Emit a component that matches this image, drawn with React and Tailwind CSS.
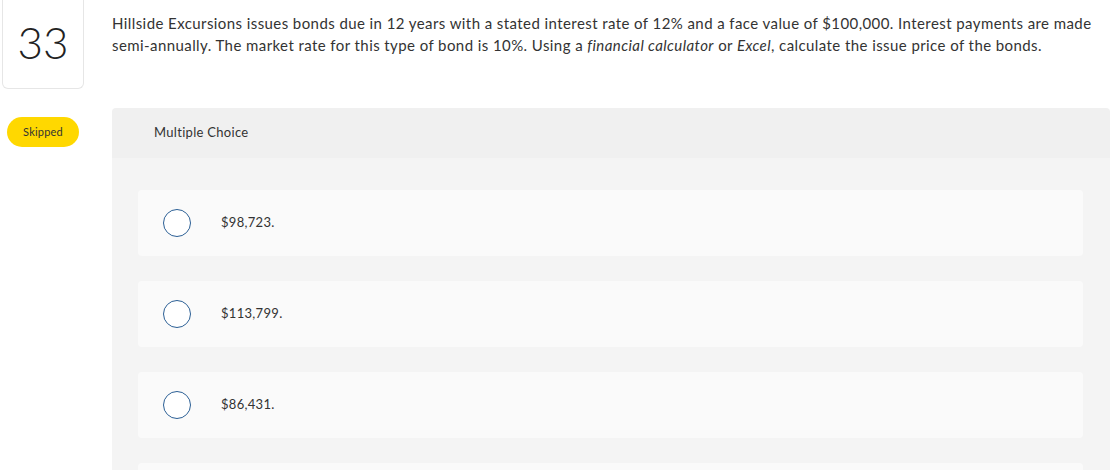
export default function App() {
  const options = ["$98,723.", "$113,799.", "$86,431.", "$101,233."];
  return (
    <div className="w-[1116px] h-[470px] overflow-hidden bg-white text-[#333] font-['Lato','Open_Sans',sans-serif]">
      <div className="flex">
        <div className="w-[112px] shrink-0 flex flex-col">
          <div className="ml-[2px] w-[82px] h-[89px] border border-t-0 border-[#e6e6e6] rounded-b-[6px] flex items-center justify-center">
            <span className="text-[44px] leading-none text-[#222] font-light mt-[-4px]">33</span>
          </div>
          <div className="ml-[7px] mt-[28px] w-[72px] h-[30px] rounded-full bg-[#ffd800] flex items-center justify-center text-[11px] tracking-[0.2px] text-[#333]">
            Skipped
          </div>
        </div>
        <div className="flex-1 pr-[6px]">
          <p className="pt-[12px] text-[15px] leading-[22px] tracking-[0.42px] text-[#333] pr-[12px]">
            Hillside Excursions issues bonds due in 12 years with a stated interest rate of 12% and a face value of $100,000. Interest payments are made semi&#8209;annually. The market rate for this type of bond is 10%. Using a <i>financial calculator</i> or <i>Excel</i>, calculate the issue price of the bonds.
          </p>
          <div className="mt-[52px] rounded-t-[4px] overflow-hidden">
            <div className="h-[50px] bg-[#f0f0f0] flex items-center pl-[42px] text-[13px] tracking-[0.3px] text-[#333]">
              Multiple Choice
            </div>
            <div className="bg-[#f4f4f4] pl-[26px] pr-[27px] pt-[32px] pb-[20px] flex flex-col gap-[25px]">
              {options.map((o) => (
                <div key={o} className="h-[66px] bg-[#fafafa] rounded-[4px] flex items-center pl-[25px]">
                  <div className="w-[28px] h-[28px] rounded-full border-[1.5px] border-[#2b5f95] bg-white shrink-0" />
                  <span className="ml-[30px] text-[13px] tracking-[0.3px] text-[#333]">{o}</span>
                </div>
              ))}
            </div>
          </div>
        </div>
      </div>
    </div>
  );
}
